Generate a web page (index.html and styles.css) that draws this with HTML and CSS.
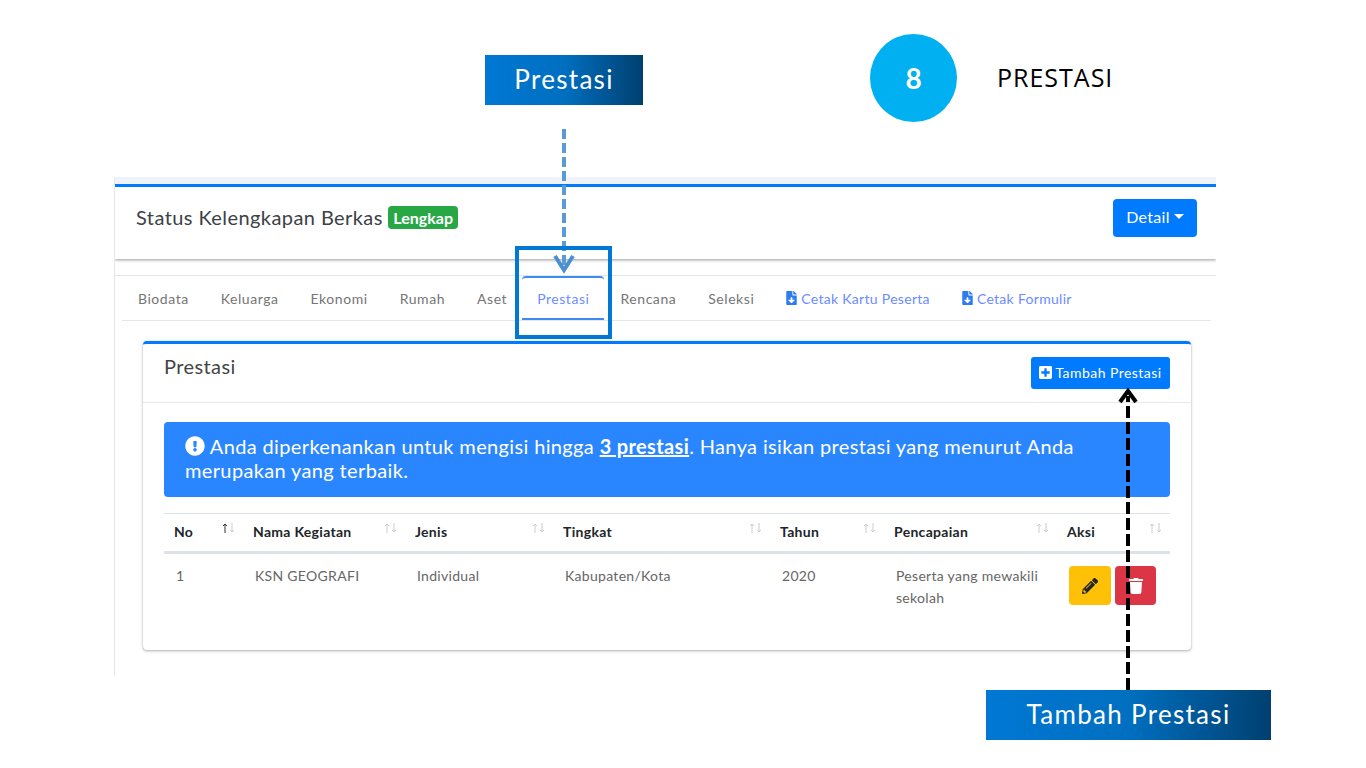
FILE: index.html
```html
<!DOCTYPE html>
<html>

<head>
    <meta charset="UTF-8">
    <title>Prestasi</title>
    <link rel="stylesheet" href="styles.css">
</head>

<body>
    <div class="slide">
        <div class="label label-top">Prestasi</div>
        <div class="step">8</div>
        <div class="step-title">PRESTASI</div>

        <div class="shot">
            <div class="status">
                <div class="status-title">Status Kelengkapan Berkas <span class="badge">Lengkap</span></div>
                <a class="btn-detail" href="#">Detail <i class="caret"></i></a>
            </div>

            <div class="tabs-wrap">
                <div class="tabs">
                    <a href="#">Biodata</a>
                    <a href="#">Keluarga</a>
                    <a href="#">Ekonomi</a>
                    <a href="#">Rumah</a>
                    <a href="#">Aset</a>
                    <a href="#" class="active">Prestasi</a>
                    <a href="#">Rencana</a>
                    <a href="#">Seleksi</a>
                    <a href="#" class="link">
                        <svg class="ico-file" viewBox="0 0 384 512"><path d="M224 136V0H24C10.7 0 0 10.7 0 24v464c0 13.3 10.7 24 24 24h336c13.3 0 24-10.7 24-24V160H248c-13.2 0-24-10.8-24-24zm76.45 211.36l-96.42 95.7c-6.65 6.61-17.39 6.61-24.04 0l-96.42-95.7C73.42 337.29 80.54 320 94.82 320H160v-80c0-8.84 7.16-16 16-16h32c8.84 0 16 7.16 16 16v80h65.18c14.28 0 21.4 17.29 11.27 27.36zM377 105L279.1 7c-4.5-4.5-10.6-7-17-7H256v128h128v-6.1c0-6.3-2.5-12.4-7-16.9z"/></svg>
                        Cetak Kartu Peserta
                    </a>
                    <a href="#" class="link">
                        <svg class="ico-file" viewBox="0 0 384 512"><path d="M224 136V0H24C10.7 0 0 10.7 0 24v464c0 13.3 10.7 24 24 24h336c13.3 0 24-10.7 24-24V160H248c-13.2 0-24-10.8-24-24zm76.45 211.36l-96.42 95.7c-6.65 6.61-17.39 6.61-24.04 0l-96.42-95.7C73.42 337.29 80.54 320 94.82 320H160v-80c0-8.84 7.16-16 16-16h32c8.84 0 16 7.16 16 16v80h65.18c14.28 0 21.4 17.29 11.27 27.36zM377 105L279.1 7c-4.5-4.5-10.6-7-17-7H256v128h128v-6.1c0-6.3-2.5-12.4-7-16.9z"/></svg>
                        Cetak Formulir
                    </a>
                </div>

                <div class="card">
                    <div class="card-head">
                        <div class="card-title">Prestasi</div>
                        <a class="btn-add" href="#">
                            <svg class="ico-plus" viewBox="0 0 448 512"><path d="M400 32H48C21.5 32 0 53.5 0 80v352c0 26.5 21.5 48 48 48h352c26.5 0 48-21.5 48-48V80c0-26.5-21.5-48-48-48zm-32 252c0 6.6-5.4 12-12 12h-92v92c0 6.6-5.4 12-12 12h-56c-6.6 0-12-5.4-12-12v-92H92c-6.6 0-12-5.4-12-12v-56c0-6.6 5.4-12 12-12h92v-92c0-6.6 5.4-12 12-12h56c6.6 0 12 5.4 12 12v92h92c6.6 0 12 5.4 12 12v56z"/></svg>
                            Tambah Prestasi
                        </a>
                    </div>
                    <div class="card-body">
                        <div class="alert">
                            <svg class="ico-alert" viewBox="0 0 512 512"><path d="M504 256c0 136.997-111.043 248-248 248S8 392.997 8 256C8 119.083 119.043 8 256 8s248 111.083 248 248zm-248 50c-25.405 0-46 20.595-46 46s20.595 46 46 46 46-20.595 46-46-20.595-46-46-46zm-43.673-165.346l7.418 136c.347 6.364 5.609 11.346 11.982 11.346h48.546c6.373 0 11.635-4.982 11.982-11.346l7.418-136c.375-6.874-5.098-12.654-11.982-12.654h-63.383c-6.884 0-12.356 5.78-11.981 12.654z"/></svg>
                            Anda diperkenankan untuk mengisi hingga <b><u>3 prestasi</u></b>. Hanya isikan prestasi yang menurut Anda merupakan yang terbaik.
                        </div>

                        <table class="data">
                            <colgroup>
                                <col class="c-no"><col class="c-nama"><col class="c-jenis"><col class="c-tingkat"><col class="c-tahun"><col class="c-capai"><col class="c-aksi">
                            </colgroup>
                            <thead>
                                <tr>
                                    <th><div class="th-in">No<svg class="sort first" viewBox="0 0 13 10"><path class="up" d="M3 10V1M1 3l2-2 2 2"/><path d="M10 0v9M8 7l2 2 2-2"/></svg></div></th>
                                    <th><div class="th-in">Nama Kegiatan<svg class="sort" viewBox="0 0 13 10"><path d="M3 10V1M1 3l2-2 2 2"/><path d="M10 0v9M8 7l2 2 2-2"/></svg></div></th>
                                    <th><div class="th-in">Jenis<svg class="sort" viewBox="0 0 13 10"><path d="M3 10V1M1 3l2-2 2 2"/><path d="M10 0v9M8 7l2 2 2-2"/></svg></div></th>
                                    <th><div class="th-in">Tingkat<svg class="sort" viewBox="0 0 13 10"><path d="M3 10V1M1 3l2-2 2 2"/><path d="M10 0v9M8 7l2 2 2-2"/></svg></div></th>
                                    <th><div class="th-in">Tahun<svg class="sort" viewBox="0 0 13 10"><path d="M3 10V1M1 3l2-2 2 2"/><path d="M10 0v9M8 7l2 2 2-2"/></svg></div></th>
                                    <th><div class="th-in">Pencapaian<svg class="sort" viewBox="0 0 13 10"><path d="M3 10V1M1 3l2-2 2 2"/><path d="M10 0v9M8 7l2 2 2-2"/></svg></div></th>
                                    <th><div class="th-in">Aksi<svg class="sort" viewBox="0 0 13 10"><path d="M3 10V1M1 3l2-2 2 2"/><path d="M10 0v9M8 7l2 2 2-2"/></svg></div></th>
                                </tr>
                            </thead>
                            <tbody>
                                <tr>
                                    <td>1</td>
                                    <td>KSN GEOGRAFI</td>
                                    <td>Individual</td>
                                    <td>Kabupaten/Kota</td>
                                    <td>2020</td>
                                    <td>Peserta yang mewakili sekolah</td>
                                    <td>
                                        <div class="actions">
                                            <a class="btn-edit" href="#"><svg viewBox="0 0 512 512"><path d="M497.9 142.1l-46.1 46.1c-4.7 4.7-12.3 4.7-17 0l-111-111c-4.7-4.7-4.7-12.3 0-17l46.1-46.1c18.7-18.7 49.1-18.7 67.9 0l60.1 60.1c18.8 18.7 18.8 49.1 0 67.9zM284.2 99.8L21.6 362.4.4 483.9c-2.9 16.4 11.4 30.6 27.8 27.8l121.5-21.3 262.6-262.6c4.7-4.7 4.7-12.3 0-17l-111-111c-4.8-4.7-12.4-4.7-17.1 0zM124.1 339.9c-5.5-5.5-5.5-14.3 0-19.8l154-154c5.5-5.5 14.3-5.5 19.8 0s5.5 14.3 0 19.8l-154 154c-5.5 5.5-14.3 5.5-19.8 0zM88 424h48v36.3l-64.5 11.3-31.1-31.1L51.7 376H88v48z"/></svg></a>
                                            <a class="btn-del" href="#"><svg viewBox="0 0 448 512"><path d="M432 32H312l-9.4-18.7A24 24 0 0 0 281.1 0H166.8a23.72 23.72 0 0 0-21.4 13.3L136 32H16A16 16 0 0 0 0 48v32a16 16 0 0 0 16 16h416a16 16 0 0 0 16-16V48a16 16 0 0 0-16-16zM53.2 467a48 48 0 0 0 47.9 45h245.8a48 48 0 0 0 47.9-45L416 128H32z"/></svg></a>
                                        </div>
                                    </td>
                                </tr>
                            </tbody>
                        </table>
                    </div>
                </div>
            </div>
        </div>

        <!-- callout arrows and box on top of the screenshot -->
        <svg class="marks" viewBox="0 0 1366 768">
            <line x1="564" y1="129" x2="564" y2="268" stroke="#5b9bd5" stroke-width="4" stroke-dasharray="10 4"/>
            <polyline points="555,256 564,270 573,256" fill="none" stroke="#4a90d0" stroke-width="4"/>
            <rect x="517" y="248" width="93" height="89" fill="none" stroke="#0078d4" stroke-width="4"/>
            <line x1="1128" y1="690" x2="1128" y2="396" stroke="#000" stroke-width="4" stroke-dasharray="12 4"/>
            <polyline points="1120,402 1128,391 1136,402" fill="none" stroke="#000" stroke-width="4"/>
        </svg>

        <div class="label label-bottom">Tambah Prestasi</div>
    </div>
</body>

</html>
```
FILE: styles.css
```css
* {
    margin: 0;
    padding: 0;
    box-sizing: border-box;
}

body {
    background-color: #fff;
    font-family: "Lato", "Noto Sans", sans-serif;
}

a {
    text-decoration: none;
}

.slide {
    position: relative;
    width: 1366px;
    height: 768px;
    overflow: hidden;
    padding: 177px 150px 0 114px;
}

/* callouts */
.label {
    position: absolute;
    display: flex;
    align-items: center;
    justify-content: center;
    padding-bottom: 2px;
    color: #fff;
    font-size: 26px;
    letter-spacing: 1.3px;
    background: linear-gradient(90deg, #0078d4 0%, #006fc0 50%, #004070 100%);
}

.label-top {
    left: 485px;
    top: 55px;
    width: 158px;
    height: 50px;
}

.label-bottom {
    left: 986px;
    top: 690px;
    width: 285px;
    height: 50px;
}

.step {
    position: absolute;
    left: 870px;
    top: 34px;
    width: 87px;
    height: 88px;
    border-radius: 50%;
    background-color: #00b0f0;
    color: #fff;
    font-size: 28px;
    font-weight: 700;
    line-height: 88px;
    text-align: center;
}

.step-title {
    position: absolute;
    left: 997px;
    top: 60px;
    font-family: "Open Sans", sans-serif;
    font-size: 25px;
    letter-spacing: 1px;
    line-height: 34px;
    color: #000;
}

.marks {
    position: absolute;
    left: 0;
    top: 0;
    width: 1366px;
    height: 768px;
    pointer-events: none;
}

/* screenshot */
.shot {
    width: 1102px;
    height: 499px;
    background-color: #fff;
    border-left: 1px solid #e4e6e9;
    border-top: 7px solid #eff3f7;
    overflow: hidden;
}

.status {
    display: flex;
    justify-content: space-between;
    align-items: flex-start;
    height: 75px;
    border-top: 3px solid #007bff;
    padding: 11px 19px 0 21px;
    box-shadow: 0 1px 3px rgba(0, 0, 0, 0.4);
    position: relative;
}

.status-title {
    font-size: 20px;
    line-height: 38px;
    letter-spacing: 0.42px;
    color: #3c4146;
}

.badge {
    display: inline-block;
    background-color: #28a745;
    color: #fff;
    font-size: 16px;
    font-weight: 700;
    line-height: 23px;
    height: 23px;
    padding: 0 5px;
    border-radius: 4px;
    letter-spacing: 0;
    vertical-align: 1px;
}

.btn-detail {
    display: flex;
    align-items: center;
    justify-content: center;
    gap: 4px;
    width: 84px;
    height: 38px;
    margin-top: 1px;
    padding-bottom: 3px;
    background-color: #007bff;
    color: #fff;
    font-size: 16px;
    letter-spacing: 0.3px;
    border-radius: 4px;
}

.caret {
    border-top: 5px solid #fff;
    border-left: 5px solid transparent;
    border-right: 5px solid transparent;
}

.tabs-wrap {
    margin-top: 16px;
    border-top: 1px solid #e2e4e7;
    padding: 0 5px 0 7px;
}

.tabs {
    display: flex;
    height: 45px;
    border-bottom: 1px solid #e3e6ea;
}

.tabs a {
    display: flex;
    align-items: center;
    padding: 0 16px;
    font-size: 14px;
    letter-spacing: 0.55px;
    color: #757575;
}

.tabs a.active {
    color: #6f8dff;
    margin-left: -1px;
    padding: 0 15px;
    border-top: 2px solid #3d8bf2;
    border-bottom: 2px solid #3d8bf2;
    border-top-left-radius: 4px;
    border-top-right-radius: 4px;
}

.tabs a.link {
    color: #6c8cff;
    letter-spacing: 0.3px;
}

.ico-file {
    width: 11px;
    height: 14px;
    fill: #2f7cf0;
    margin-right: 4px;
}

.card {
    width: 1048px;
    height: 309px;
    margin: 20px 0 0 21px;
    border-top: 3px solid #007bff;
    border-radius: 4px;
    box-shadow: 0 0 1px rgba(0, 0, 0, 0.2), 0 1px 3px rgba(0, 0, 0, 0.3);
}

.card-head {
    display: flex;
    justify-content: space-between;
    height: 59px;
    padding: 13px 21px 0;
    border-bottom: 1px solid #e8e8e8;
}

.card-title {
    margin-top: -3px;
    font-size: 20px;
    line-height: 24px;
    letter-spacing: 0.4px;
    color: #444;
}

.btn-add {
    display: flex;
    align-items: center;
    justify-content: center;
    gap: 3px;
    width: 139px;
    height: 32px;
    padding-bottom: 1px;
    background-color: #007bff;
    color: #fff;
    font-size: 14px;
    letter-spacing: 0.45px;
    border-radius: 3px;
}

.ico-plus {
    width: 13px;
    height: 15px;
    fill: #fff;
}

.card-body {
    padding: 19px 21px 0;
}

.alert {
    height: 75px;
    padding: 12px 21px;
    background-color: #2a86ff;
    color: #fff;
    border-radius: 4px;
    font-size: 20px;
    line-height: 24px;
    letter-spacing: 0.36px;
}

.ico-alert {
    width: 20px;
    height: 20px;
    fill: #fff;
    vertical-align: -2px;
}

.data {
    width: 1006px;
    margin-top: 16px;
    border-collapse: collapse;
    table-layout: fixed;
    font-size: 14px;
    letter-spacing: 0.3px;
}

.c-no { width: 79px; }
.c-nama { width: 162px; }
.c-jenis { width: 148px; }
.c-tingkat { width: 217px; }
.c-tahun { width: 114px; }
.c-capai { width: 173px; }
.c-aksi { width: 113px; }

.data th {
    height: 39px;
    padding: 0 8px 0 10px;
    border-top: 1px solid #dee2e6;
    border-bottom: 3px solid #dee2e6;
    text-align: left;
    font-weight: 700;
    color: #212529;
}

.th-in {
    display: flex;
    justify-content: space-between;
    padding-bottom: 2px;
}

.sort {
    width: 13px;
    height: 10px;
    margin-top: 0;
    fill: none;
    stroke: #c9ccd0;
    stroke-width: 1;
}

.sort .up {
    stroke: #333;
}

.data td {
    padding: 11px 12px;
    vertical-align: top;
    color: #666;
    line-height: 22px;
}

.data td:last-child {
    padding: 12px 0 0 12px;
}

.actions {
    display: flex;
    gap: 4px;
}

.actions a {
    display: flex;
    align-items: center;
    justify-content: center;
    width: 42px;
    height: 39px;
    border-radius: 4px;
}

.btn-edit {
    background-color: #ffc107;
}

.btn-edit svg {
    width: 16px;
    height: 16px;
    fill: #212529;
}

.actions .btn-del {
    width: 41px;
    background-color: #dc3545;
}

.btn-del svg {
    width: 14px;
    height: 16px;
    fill: #fff;
}
```
